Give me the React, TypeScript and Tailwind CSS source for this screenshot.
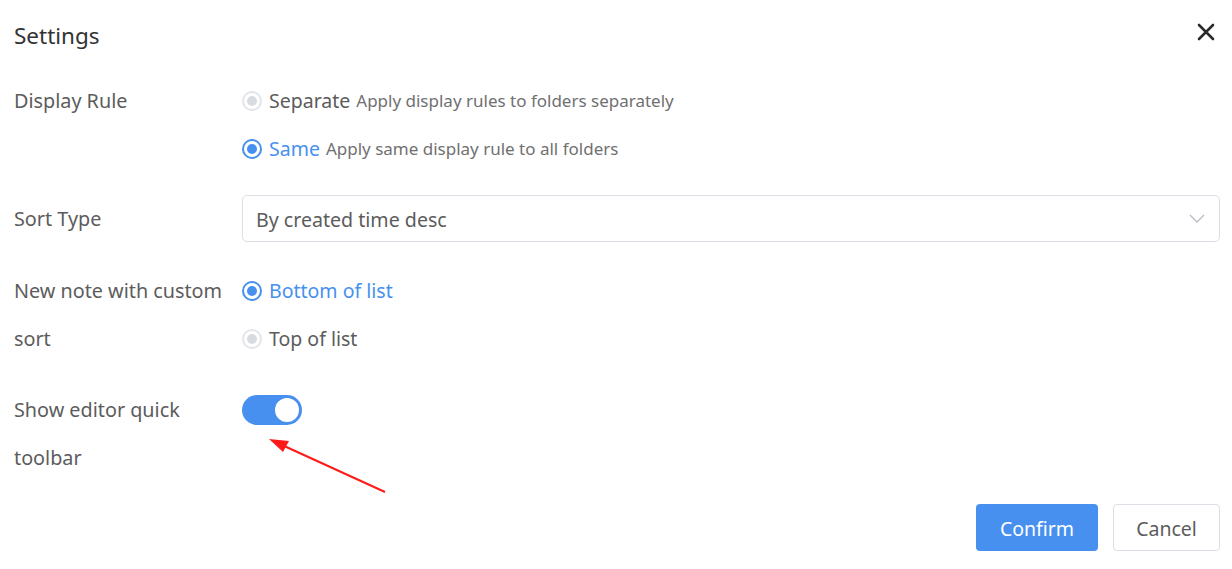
import React from 'react';

function Radio({ checked, label, desc }: { checked: boolean; label: string; desc?: string }) {
  return (
    <div className="flex items-center h-12">
      {checked ? (
        <span className="w-[20px] h-[20px] rounded-full border-2 border-[#4790f0] flex items-center justify-center">
          <span className="w-[10px] h-[10px] rounded-full bg-[#4790f0]" />
        </span>
      ) : (
        <span className="w-[20px] h-[20px] rounded-full border-2 border-[#e3e5ea] flex items-center justify-center">
          <span className="w-[10px] h-[10px] rounded-full bg-[#d9dbe2]" />
        </span>
      )}
      <span className={`ml-[7px] text-[19.5px] ${checked ? 'text-[#4790f0]' : 'text-[#5c5c5c]'}`}>{label}</span>
      {desc && <span className="ml-[6px] text-[17px] text-[#707070]">{desc}</span>}
    </div>
  );
}

function Row({ label, children, className = '' }: { label: React.ReactNode; children: React.ReactNode; className?: string }) {
  return (
    <div className={`flex ${className}`}>
      <div className="w-[228px] shrink-0 text-[19.8px] leading-[48px] text-[#5c5c5c]">{label}</div>
      <div className="flex-1">{children}</div>
    </div>
  );
}

export default function App() {
  return (
    <div className="relative w-[1232px] h-[569px] bg-white font-['Noto_Sans',sans-serif] overflow-hidden">
      {/* Header */}
      <div className="flex items-center justify-between pl-[14px] pr-[14px] pt-[20px]">
        <h1 className="text-[22.5px] leading-[32px] text-[#333]">Settings</h1>
        <svg width="20" height="20" viewBox="0 0 20 20" className="mr-[2px] -mt-[8px]">
          <path d="M3 3 L17 17 M17 3 L3 17" stroke="#2b2b2b" strokeWidth="2.6" strokeLinecap="round" />
        </svg>
      </div>

      <div className="pl-[14px] pr-[12px] pt-[25px]">
        <Row label="Display Rule">
          <Radio checked={false} label="Separate" desc="Apply display rules to folders separately" />
          <Radio checked label="Same" desc="Apply same display rule to all folders" />
        </Row>

        <Row label="Sort Type" className="mt-[22px]">
          <div className="h-[47px] border border-[#dcdfe6] rounded-[5px] flex items-center justify-between pl-[13px] pr-[14px]">
            <span className="text-[19.6px] text-[#5c5c5c] pt-[2px]">By created time desc</span>
            <svg width="16" height="10" viewBox="0 0 16 10">
              <path d="M1 1 L8 8 L15 1" stroke="#b8bcc4" strokeWidth="1.3" fill="none" />
            </svg>
          </div>
        </Row>

        <Row label={<>New note with custom<br />sort</>} className="mt-[24px]">
          <Radio checked label="Bottom of list" />
          <Radio checked={false} label="Top of list" />
        </Row>

        <Row label={<>Show editor quick<br />toolbar</>} className="mt-[23px]">
          <div className="h-12 flex items-center">
            <span className="w-[60px] h-[30px] rounded-full bg-[#4790f0] flex items-center justify-end pr-[3px]">
              <span className="w-[24px] h-[24px] rounded-full bg-white" />
            </span>
          </div>
        </Row>

        <div className="flex justify-end gap-[15px] mt-[22px]">
          <button className="w-[122px] h-[47px] rounded-[4px] bg-[#4790f0] text-white text-[19.5px] pt-[3px]">Confirm</button>
          <button className="w-[107px] h-[47px] rounded-[4px] border border-[#dcdfe6] bg-white text-[#5c5c5c] text-[19.5px] pt-[3px]">Cancel</button>
        </div>
      </div>

      {/* Annotation arrow */}
      <svg className="absolute left-0 top-0 pointer-events-none" width="1232" height="569">
        <line x1="385" y1="492" x2="282" y2="445" stroke="#ff1a1a" strokeWidth="2" />
        <polygon points="269,439 289,441 283,452" fill="#ff1a1a" />
      </svg>
    </div>
  );
}
